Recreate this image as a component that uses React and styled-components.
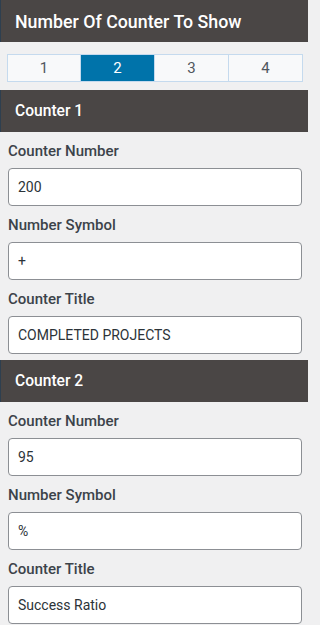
import React, { useState } from "react";
import styled, { createGlobalStyle } from "styled-components";

const GlobalStyle = createGlobalStyle`
  html, body {
    margin: 0;
    height: 100%;
    overflow: hidden;
    background: #f0f0f1;
    font-family: Roboto, "Liberation Sans", Arial, sans-serif;
  }
`;

const Panel = styled.div`
  width: 308px;
  background: #f0f0f1;
`;

const SectionHead = styled.div`
  height: 42px;
  display: flex;
  align-items: center;
  padding-left: 14px;
  background: #4a4645;
  border-left: 1px solid #2e3f4f;
  color: #ffffff;
  font-size: ${(p) => (p.$big ? "17.8px" : "15.6px")};
  font-weight: 500;
  box-sizing: border-box;
`;

const Tabs = styled.div`
  display: grid;
  grid-template-columns: repeat(4, 1fr);
  margin: 12px 5px 8px 7px;
  height: 28px;
`;

const Tab = styled.button`
  border: 1px solid #c5daee;
  margin-left: -1px;
  background: ${(p) => (p.$active ? "#0073aa" : "#f8f9fa")};
  color: ${(p) => (p.$active ? "#ffffff" : "#50575e")};
  font-family: inherit;
  font-size: 15px;
  padding: 0;
  cursor: pointer;
  &:first-child {
    margin-left: 0;
  }
`;

const Fields = styled.div`
  padding: 0 6px 6px 8px;
`;

const Field = styled.div`
  padding-top: 10px;
`;

const Label = styled.div`
  font-size: 15px;
  font-weight: 500;
  line-height: 18px;
  color: #3c434a;
  margin-bottom: 8px;
`;

const Input = styled.input`
  display: block;
  width: 100%;
  height: 38px;
  box-sizing: border-box;
  border: 1px solid #8c8f94;
  border-radius: 4px;
  background: #ffffff;
  padding: 0 9px;
  font-family: inherit;
  font-size: 14px;
  color: #2c3338;
  outline: none;
`;

const counters = [
  { number: "200", symbol: "+", title: "COMPLETED PROJECTS" },
  { number: "95", symbol: "%", title: "Success Ratio" },
];

const App = () => {
  const [count, setCount] = useState(2);
  return (
    <Panel>
      <GlobalStyle />
      <SectionHead $big>Number Of Counter To Show</SectionHead>
      <Tabs>
        {[1, 2, 3, 4].map((n) => (
          <Tab key={n} $active={n === count} onClick={() => setCount(n)}>
            {n}
          </Tab>
        ))}
      </Tabs>
      {counters.map((c, i) => (
        <div key={i}>
          <SectionHead>Counter {i + 1}</SectionHead>
          <Fields>
            <Field>
              <Label>Counter Number</Label>
              <Input defaultValue={c.number} />
            </Field>
            <Field>
              <Label>Number Symbol</Label>
              <Input defaultValue={c.symbol} />
            </Field>
            <Field>
              <Label>Counter Title</Label>
              <Input defaultValue={c.title} />
            </Field>
          </Fields>
        </div>
      ))}
    </Panel>
  );
};

export default App;
